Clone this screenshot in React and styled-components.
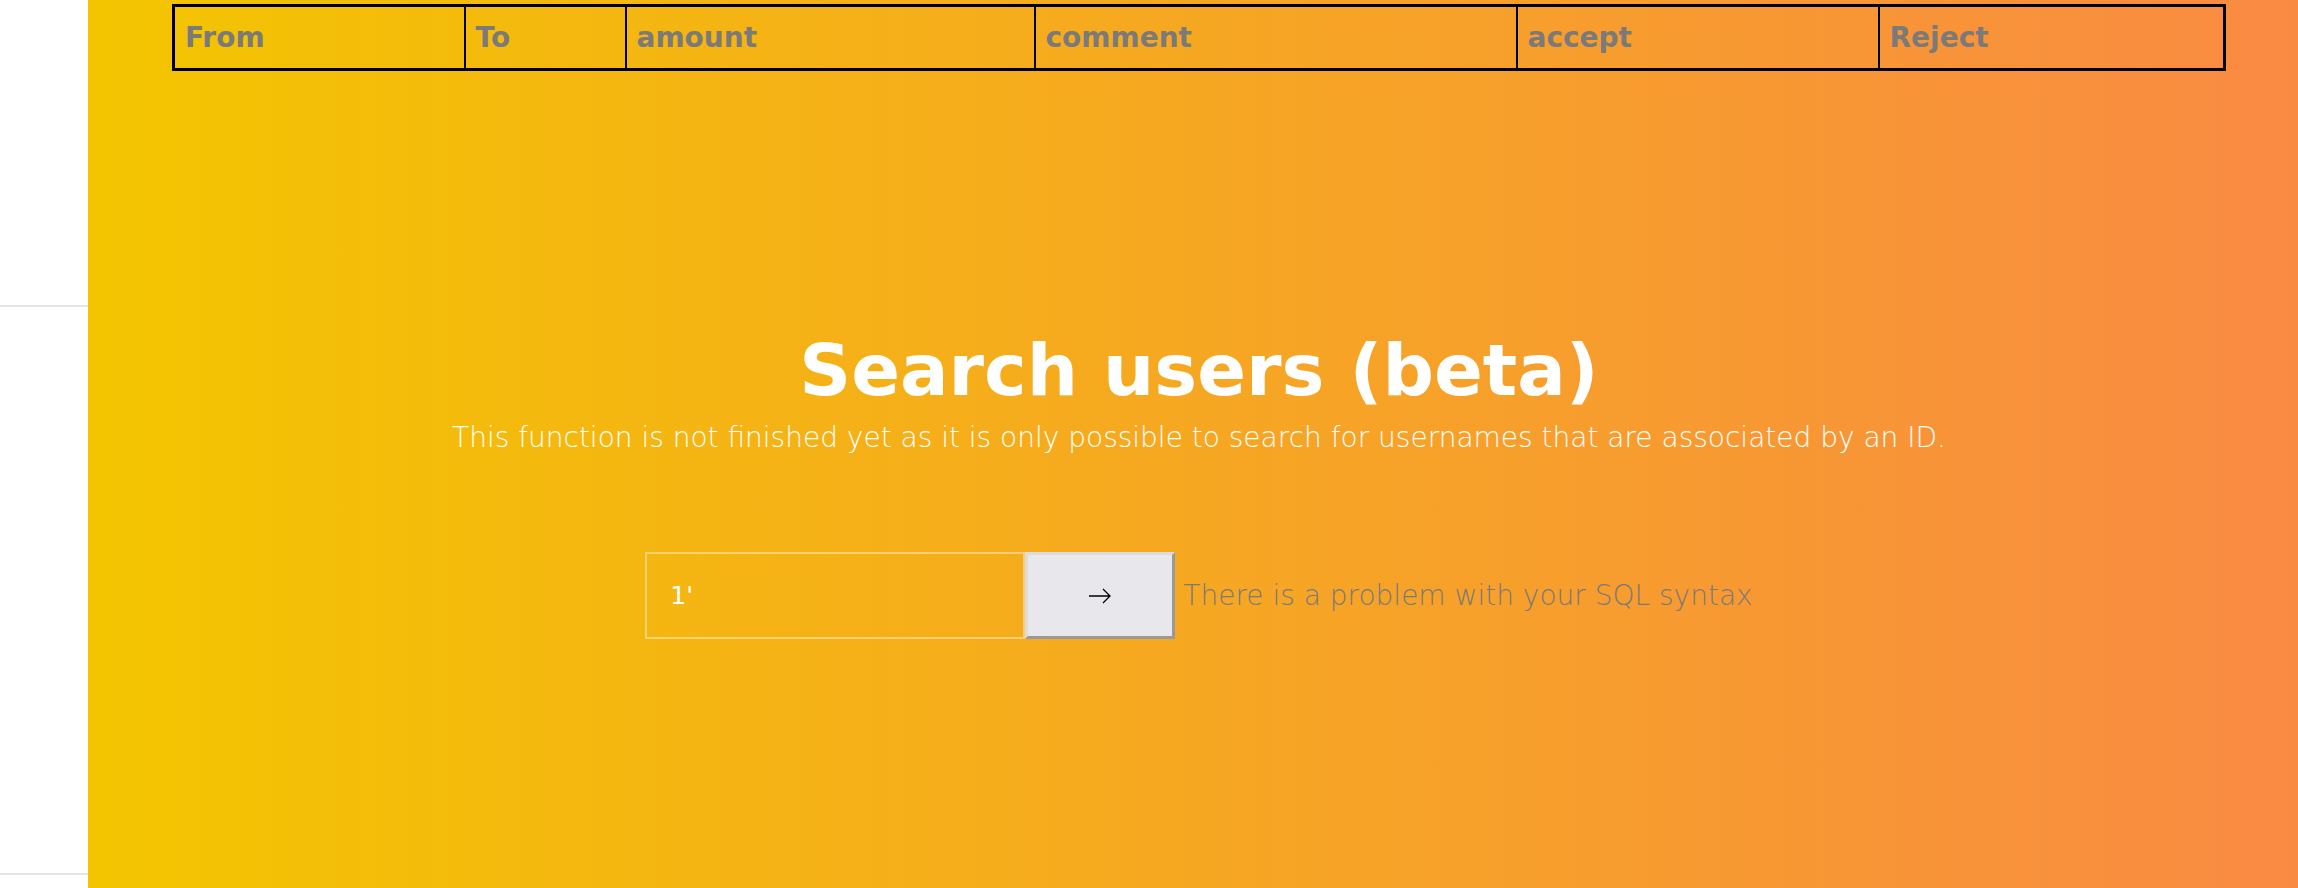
import styled, { createGlobalStyle } from "styled-components";

const columns = [
	{ label: "From", width: 291 },
	{ label: "To", width: 161 },
	{ label: "amount", width: 409 },
	{ label: "comment", width: 482 },
	{ label: "accept", width: 362 },
	{ label: "Reject", width: 346 },
];

const Arrow = () => (
	<svg width="22" height="16" viewBox="0 0 22 16" fill="none" stroke="#000" strokeWidth="1.3">
		<path d="M0 8h21M14 1l7 7-7 7" />
	</svg>
);

export default () => (
	<>
		<GlobalStyle />
		<Page>
			<Sidebar>
				<SideSection height={305} />
				<SideSection height={566} />
			</Sidebar>
			<Main>
				<Requests>
					<thead>
						<tr>
							{columns.map((col) => (
								<HeadCell key={col.label} width={col.width}>
									{col.label}
								</HeadCell>
							))}
						</tr>
					</thead>
				</Requests>
				<Search>
					<Title>Search users (beta)</Title>
					<Intro>
						This function is not finished yet as it is only possible to search for usernames
						that are associated by an ID.
					</Intro>
					<Form onSubmit={(e) => e.preventDefault()}>
						<Input defaultValue="1'" />
						<Submit type="submit" aria-label="Search">
							<Arrow />
						</Submit>
						<Error>There is a problem with your SQL syntax</Error>
					</Form>
				</Search>
			</Main>
		</Page>
	</>
);

const GlobalStyle = createGlobalStyle`
	body {
		margin: 0;
		font-family: "DejaVu Sans", "Noto Sans", sans-serif;
		background: #fff;
	}
`;

const Page = styled.div`
	display: flex;
	height: 888px;
	overflow: hidden;
`;

const Sidebar = styled.nav`
	flex: 0 0 88px;
	background: #fff;
`;

const SideSection = styled.div`
	height: ${(p) => p.height}px;
	border-bottom: 2px solid #e5e5e5;
`;

const Main = styled.main`
	flex: 1;
	display: flex;
	flex-direction: column;
	padding: 4px 75px 0 84px;
	background: linear-gradient(to right, #f3c500, #f98a43);
`;

const Requests = styled.table`
	width: 2051px;
	border-collapse: collapse;
	table-layout: fixed;
	border: 3px solid #000;
`;

const HeadCell = styled.th`
	width: ${(p) => p.width}px;
	height: 64px;
	padding: 0 10px;
	border: 2px solid #000;
	box-sizing: border-box;
	text-align: left;
	font-size: 28px;
	font-weight: bold;
	color: #7a7a7a;
`;

const Search = styled.section`
	display: flex;
	flex-direction: column;
	align-items: center;
	margin-top: 257px;
	color: #fff;
`;

const Title = styled.h1`
	margin: 0;
	font-size: 72px;
	font-weight: bold;
	line-height: 84px;
`;

const Intro = styled.p`
	margin: 9px 0 0;
	font-size: 28px;
	font-weight: 200;
	line-height: 33px;
`;

const Form = styled.form`
	display: flex;
	align-items: center;
	margin-top: 98px;
`;

const Input = styled.input`
	width: 380px;
	height: 87px;
	box-sizing: border-box;
	padding: 0 23px;
	border: 2px solid rgba(255, 255, 255, 0.4);
	background: transparent;
	color: #fff;
	font-family: inherit;
	font-size: 25px;
	outline: none;
`;

const Submit = styled.button`
	display: flex;
	align-items: center;
	justify-content: center;
	width: 150px;
	height: 87px;
	box-sizing: border-box;
	border: 3px solid;
	border-color: #dcdcdc #999 #999 #dcdcdc;
	background: #e8e7ec;
	cursor: pointer;
`;

const Error = styled.span`
	margin-left: 8px;
	font-size: 28px;
	font-weight: 200;
	color: #7a7a7a;
`;
